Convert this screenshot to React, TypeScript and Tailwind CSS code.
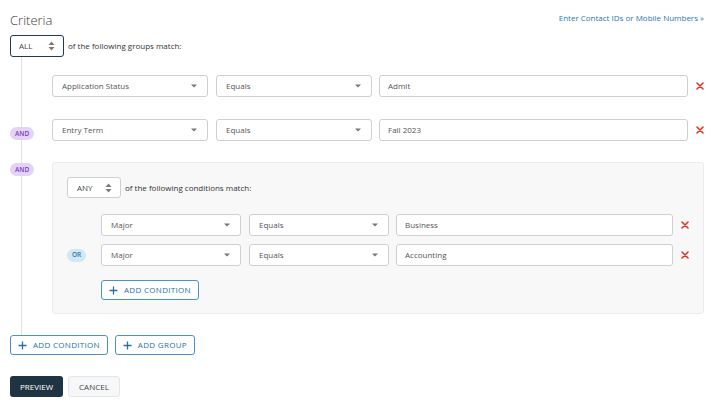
import React from 'react';

const font = { fontFamily: '"Open Sans", "Liberation Sans", sans-serif' };

function Caret() {
  return (
    <svg width="6" height="4" viewBox="0 0 6 4" className="shrink-0">
      <path d="M0 0.5h6L3 3.5z" fill="#777" />
    </svg>
  );
}

function Sort() {
  return (
    <svg width="7" height="10" viewBox="0 0 7 10" className="shrink-0">
      <path d="M0.5 4h6L3.5 0.5z M0.5 6h6L3.5 9.5z" fill="#7a7a7a" />
    </svg>
  );
}

function Cross() {
  return (
    <svg width="8" height="8" viewBox="0 0 8 8" className="shrink-0">
      <path d="M1 1l6 6M7 1L1 7" stroke="#e0301e" strokeWidth="1.5" strokeLinecap="round" />
    </svg>
  );
}

function Plus() {
  return (
    <svg width="9" height="9" viewBox="0 0 9 9" className="shrink-0">
      <path d="M4.5 0.5v8M0.5 4.5h8" stroke="#2a6f9e" strokeWidth="1.3" />
    </svg>
  );
}

function Select({ label, width }: { label: string; width: string }) {
  return (
    <div
      className={`flex h-[22px] ${width} shrink-0 items-center justify-between rounded-[3px] border border-[#cfcfcf] bg-white pl-[9px] pr-[10px] text-[8px] text-[#555]`}
    >
      <span>{label}</span>
      <Caret />
    </div>
  );
}

function ValueInput({ value }: { value: string }) {
  return (
    <div className="flex h-[22px] flex-1 items-start rounded-[3px] border border-[#cfcfcf] bg-white pl-[8px] pt-[4px] text-[8px] text-[#555]">
      {value}
    </div>
  );
}

function Badge({ label, tone }: { label: string; tone: 'and' | 'or' }) {
  return (
    <span
      className={`inline-flex h-[13px] items-center justify-center rounded-full px-[5px] text-[6.5px] font-semibold ${
        tone === 'and' ? 'bg-[#e3d3f6] text-[#7c3cc0]' : 'bg-[#d2e7f4] text-[#2c79ad]'
      }`}
    >
      {label}
    </span>
  );
}

function OutlineButton({ label }: { label: string }) {
  return (
    <button className="flex h-[20px] items-center gap-[6px] rounded-[3px] border border-[#4a93c4] bg-white px-[7px] text-[8px] tracking-[0.3px] text-[#2a6f9e]">
      <Plus />
      <span>{label}</span>
    </button>
  );
}

export default function App() {
  return (
    <div style={font} className="h-[414px] w-[720px] overflow-hidden bg-white pl-[10px] pr-[16px] text-[#333]">
      <div className="flex items-start justify-between pt-[11px]">
        <h1 className="text-[13px] font-light leading-[18px] text-[#3a3a3a]">Criteria</h1>
        <a className="pr-[0px] pt-[1px] text-[8px] text-[#2b77b0]">Enter Contact IDs or Mobile Numbers »</a>
      </div>

      <div className="mt-[6px] flex items-center gap-[4px]">
        <div className="flex h-[22px] w-[54px] items-center justify-between rounded-[3px] border-[1.5px] border-[#1f3b52] pl-[8px] pr-[8px] text-[8px] text-[#444]">
          <span>ALL</span>
          <Sort />
        </div>
        <span className="text-[8px] text-[#333]">of the following groups match:</span>
      </div>

      <div className="relative">
        <div className="absolute bottom-0 left-[11px] top-0 w-px bg-[#e2e2e2]" />

        <div className="relative flex flex-col pb-[21px] pt-[18px]">
          {/* row 1 */}
          <div className="flex h-[22px] items-center">
            <div className="w-[42px] shrink-0" />
            <Select label="Application Status" width="w-[156px]" />
            <div className="w-[8px]" />
            <Select label="Equals" width="w-[156px]" />
            <div className="w-[7px]" />
            <ValueInput value="Admit" />
            <div className="flex w-[16px] shrink-0 justify-end">
              <Cross />
            </div>
          </div>

          {/* row 2 */}
          <div className="mt-[22px] flex h-[22px] items-center">
            <div className="w-[42px] shrink-0">
              <Badge label="AND" tone="and" />
            </div>
            <Select label="Entry Term" width="w-[156px]" />
            <div className="w-[8px]" />
            <Select label="Equals" width="w-[156px]" />
            <div className="w-[7px]" />
            <ValueInput value="Fall 2023" />
            <div className="flex w-[16px] shrink-0 justify-end">
              <Cross />
            </div>
          </div>

          {/* group */}
          <div className="mt-[21px] flex items-start">
            <div className="flex w-[42px] shrink-0 pt-[1px]">
              <Badge label="AND" tone="and" />
            </div>
            <div className="flex-1 rounded-[3px] border border-[#ececec] bg-[#f8f8f8] px-[14px] pb-[13px] pt-[14px]">
              <div className="flex h-[21px] items-center gap-[4px]">
                <div className="flex h-[21px] w-[54px] items-center justify-between rounded-[3px] border border-[#cfcfcf] bg-white pl-[9px] pr-[8px] text-[8px] text-[#444]">
                  <span>ANY</span>
                  <Sort />
                </div>
                <span className="text-[8px] text-[#333]">of the following conditions match:</span>
              </div>

              <div className="mt-[16px] flex h-[22px] items-center">
                <div className="w-[34px] shrink-0" />
                <Select label="Major" width="w-[140px]" />
                <div className="w-[8px]" />
                <Select label="Equals" width="w-[140px]" />
                <div className="w-[7px]" />
                <ValueInput value="Business" />
                <div className="flex w-[16px] shrink-0 justify-end">
                  <Cross />
                </div>
              </div>

              <div className="mt-[8px] flex h-[22px] items-center">
                <div className="flex w-[34px] shrink-0">
                  <Badge label="OR" tone="or" />
                </div>
                <Select label="Major" width="w-[140px]" />
                <div className="w-[8px]" />
                <Select label="Equals" width="w-[140px]" />
                <div className="w-[7px]" />
                <ValueInput value="Accounting" />
                <div className="flex w-[16px] shrink-0 justify-end">
                  <Cross />
                </div>
              </div>

              <div className="mt-[14px] flex pl-[34px]">
                <OutlineButton label="ADD CONDITION" />
              </div>
            </div>
          </div>
        </div>
      </div>

      <div className="flex gap-[7px]">
        <OutlineButton label="ADD CONDITION" />
        <OutlineButton label="ADD GROUP" />
      </div>

      <div className="mt-[21px] flex gap-[5px]">
        <button className="h-[21px] rounded-[3px] bg-[#1f3442] px-[10px] text-[8px] text-white">PREVIEW</button>
        <button className="h-[21px] rounded-[3px] border border-[#e4e6e8] bg-[#f6f7f8] px-[10px] text-[8px] text-[#444]">
          CANCEL
        </button>
      </div>
    </div>
  );
}
